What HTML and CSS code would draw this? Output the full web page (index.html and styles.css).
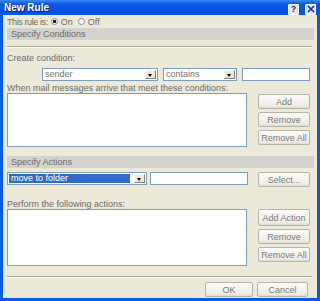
FILE: index.html
```html
<!DOCTYPE html>
<html lang="en">

<head>
    <meta charset="UTF-8">
    <meta name="viewport" content="width=device-width, initial-scale=1.0">
    <title>New Rule</title>
    <link rel="stylesheet" href="styles.css">
</head>

<body>
    <div class="window">
        <div class="titlebar">
            <span class="title">New Rule</span>
            <span class="tb-buttons">
                <span class="tb-btn">?</span>
                <span class="tb-btn">
                    <svg width="8" height="8" viewBox="0 0 8 8"><path d="M1 1 L7 7 M7 1 L1 7" stroke="#1c2f8c" stroke-width="1.6"/></svg>
                </span>
            </span>
        </div>

        <div class="client">
            <div class="rule-state">
                <span class="rule-label">This rule is:</span>
                <span class="radio checked"></span><span>On</span>
                <span class="radio"></span><span>Off</span>
            </div>

            <div class="band">Specify Conditions</div>
            <div class="sep"></div>

            <div class="label">Create condition:</div>
            <div class="cond-row">
                <div class="combo combo-sender"><span class="combo-text">sender</span><span class="combo-arrow"></span></div>
                <div class="combo combo-op"><span class="combo-text">contains</span><span class="combo-arrow"></span></div>
                <div class="field field-value"></div>
            </div>

            <div class="label label-list">When mail messages arrive that meet these conditions:</div>
            <div class="list-row cond-list">
                <div class="listbox"></div>
                <div class="btn-col">
                    <button class="btn">Add</button>
                    <button class="btn">Remove</button>
                    <button class="btn">Remove All</button>
                </div>
            </div>

            <div class="band band-actions">Specify Actions</div>
            <div class="action-row">
                <div class="combo combo-action"><span class="combo-text selected">move to folder</span><span class="combo-arrow"></span></div>
                <div class="field field-folder"></div>
                <button class="btn btn-select">Select...</button>
            </div>

            <div class="label label-list label-perform">Perform the following actions:</div>
            <div class="list-row action-list">
                <div class="listbox"></div>
                <div class="btn-col">
                    <button class="btn btn-tall">Add Action</button>
                    <button class="btn">Remove</button>
                    <button class="btn">Remove All</button>
                </div>
            </div>

            <div class="sep sep-bottom"></div>
            <div class="footer">
                <button class="btn btn-ok">OK</button>
                <button class="btn btn-cancel">Cancel</button>
            </div>
        </div>
    </div>
</body>

</html>
```

FILE: styles.css
```css
/* General Reset */
* {
    margin: 0;
    padding: 0;
    box-sizing: border-box;
}

body {
    width: 320px;
    height: 301px;
    overflow: hidden;
    font-family: 'Liberation Sans', Arial, sans-serif;
    font-size: 9px;
    color: #6b6b6b;
}

/* Window frame */
.window {
    width: 320px;
    height: 301px;
    background: #0a5ae6;
    padding: 0 3px 3px 3px;
    display: flex;
    flex-direction: column;
}

.titlebar {
    height: 15px;
    margin: 0 -3px;
    padding: 0 4px 0 4px;
    display: flex;
    align-items: center;
    justify-content: space-between;
    background: linear-gradient(#3d8cf5, #0a5ae6 25%, #0652de 80%, #0a5ae6);
}

.title {
    color: #fff;
    font-weight: bold;
    font-size: 10px;
    text-shadow: 1px 1px 0 #0a246a;
}

.tb-buttons {
    display: flex;
    gap: 6px;
    margin-top: 3px;
}

.tb-btn {
    width: 11px;
    height: 11px;
    border: 1px solid #fff;
    border-radius: 1px;
    background: #dfe8f8;
    color: #1c2f8c;
    font-weight: bold;
    font-size: 9px;
    line-height: 9px;
    display: flex;
    align-items: center;
    justify-content: center;
}

/* Client area */
.client {
    flex: 1;
    background: #ece9d8;
    padding: 0 3px 0 4px;
}

.rule-state {
    height: 11px;
    margin-top: 1px;
    display: flex;
    align-items: center;
    gap: 3px;
}

.rule-label {
    letter-spacing: -0.4px;
}

.radio {
    width: 7px;
    height: 7px;
    border: 1px solid #7a8aa8;
    border-radius: 50%;
    background: #fff;
    margin-left: 2px;
}

.rule-label + .radio {
    margin-left: 0;
}

.radio.checked {
    background: radial-gradient(circle, #222 0 1.5px, #fff 2px);
}

.band {
    height: 12px;
    margin-top: 1px;
    padding-left: 4px;
    line-height: 12px;
    background: #d4d2cc;
}

.sep {
    height: 2px;
    margin: 6px 2px 0 0;
    border-top: 1px solid #aca899;
    border-bottom: 1px solid #fff;
}

.label {
    height: 11px;
    line-height: 11px;
    margin-top: 5px;
}

.label-list {
    height: 10px;
    margin-top: 2px;
    line-height: 10px;
}

/* Combo boxes and fields */
.cond-row,
.action-row {
    display: flex;
    gap: 5px;
    margin-top: 4px;
    height: 13px;
}

.cond-row {
    padding-left: 35px;
}

.combo {
    height: 13px;
    border: 1px solid #7f9db9;
    background: #fff;
    display: flex;
    align-items: stretch;
}

.combo-text {
    flex: 1;
    padding-left: 2px;
    line-height: 11px;
    color: #777;
}

.combo-text.selected {
    background: #316ac5;
    color: #fff;
    margin: 1px 3px 1px 1px;
    line-height: 9px;
}

.combo-arrow {
    width: 11px;
    margin: 1px;
    background: #ece9d8;
    border: 1px solid;
    border-color: #fff #808080 #808080 #fff;
    position: relative;
}

.combo-arrow::after {
    content: '';
    position: absolute;
    left: 2px;
    top: 3px;
    border-left: 2.5px solid transparent;
    border-right: 2.5px solid transparent;
    border-top: 3px solid #000;
}

.combo-sender {
    width: 116px;
}

.combo-op {
    width: 74px;
}

.field {
    height: 13px;
    border: 1px solid #7f9db9;
    background: #fff;
}

.field-value {
    width: 68px;
}

.action-row {
    gap: 3px;
    height: 15px;
}

.combo-action {
    width: 140px;
}

.field-folder {
    width: 98px;
}

/* Lists */
.list-row {
    display: flex;
    justify-content: space-between;
    padding-right: 4px;
}

.listbox {
    width: 240px;
    border: 1px solid #7f9db9;
    background: #fff;
}

.cond-list {
    height: 54px;
}

.action-list {
    height: 57px;
}

.btn-col {
    display: flex;
    flex-direction: column;
    gap: 3px;
    padding-top: 1px;
}

.action-list .btn-col {
    padding-top: 0;
    gap: 3px;
}

.btn {
    width: 52px;
    height: 15px;
    font-family: inherit;
    font-size: 9px;
    color: #7a7a7a;
    background: linear-gradient(#fbfbf8, #eeece4 85%, #dcd9ce);
    border: 1px solid #b8b4a6;
    border-radius: 2px;
}

.btn-tall {
    height: 17px;
}

.band-actions {
    margin-top: 9px;
}

.btn-select {
    margin-left: 7px;
}

.label-perform {
    margin-top: 12px;
}

.sep-bottom {
    margin-top: 10px;
    margin-right: 2px;
}

.footer {
    display: flex;
    justify-content: flex-end;
    gap: 4px;
    margin-top: 4px;
    padding-right: 6px;
}

.btn-ok {
    width: 48px;
}

.btn-cancel {
    width: 51px;
}
```
